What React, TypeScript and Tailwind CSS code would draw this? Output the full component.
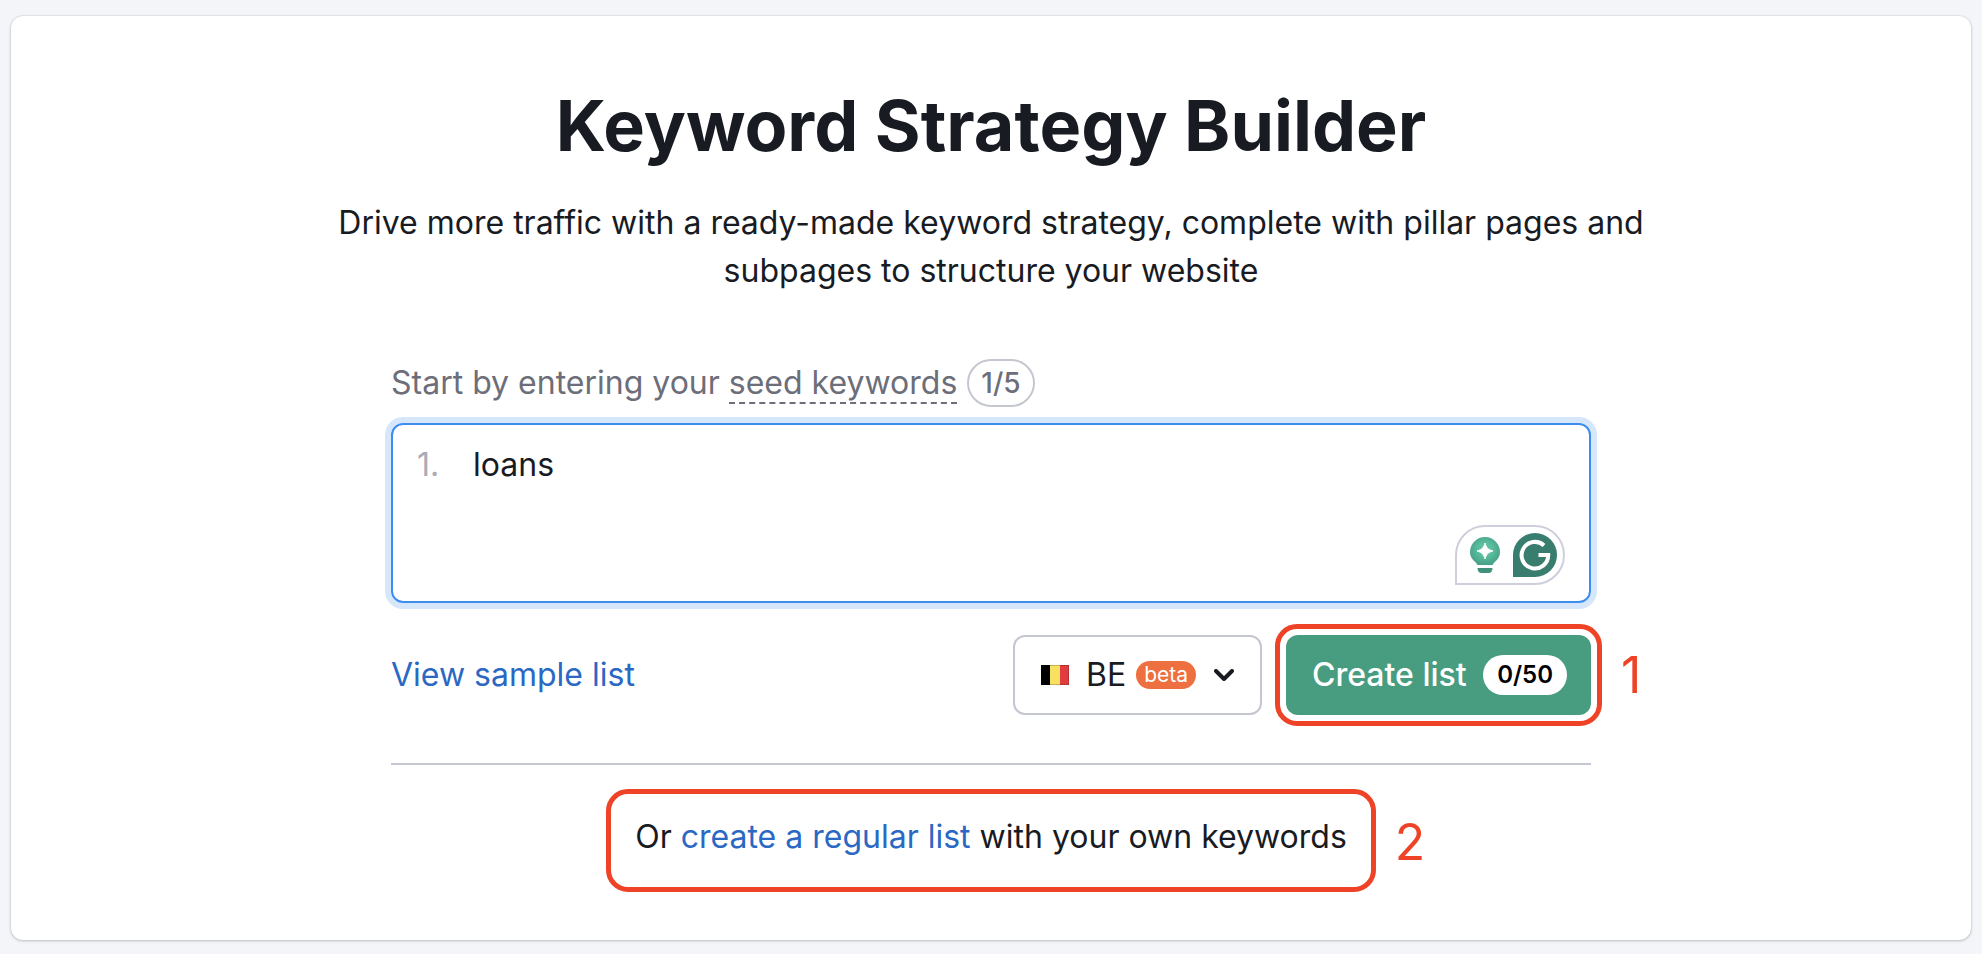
import { useState } from 'react';

const BulbIcon: React.FC = () => (
  <svg width="30" height="36" viewBox="0 0 30 36" aria-hidden="true">
    <defs>
      <radialGradient id="bulb" cx="0.5" cy="0.45" r="0.55">
        <stop offset="0.4" stopColor="#5bc0a0" />
        <stop offset="1" stopColor="#48a087" />
      </radialGradient>
    </defs>
    <path d="M15 0a15 15 0 0 1 15 15c0 5-3 8-5.500 10.200-.8.800-1.500 1.600-1.800 2.800H7.300c-.3-1.200-1-2-1.800-2.800C3 23 0 20 0 15A15 15 0 0 1 15 0Z" fill="url(#bulb)" />
    <path d="M15 6c1.300 4.800 3.200 6.700 8 8-4.800 1.300-6.700 3.200-8 8-1.300-4.800-3.200-6.700-8-8 4.800-1.300 6.700-3.200 8-8Z" fill="#fff" stroke="#fff" strokeLinejoin="round" />
    <path d="M7.500 31h15c0 3-1.500 5-4 5h-7c-2.500 0-4-2-4-5Z" fill="#419079" />
  </svg>
);

const GrammarIcon: React.FC = () => (
  <svg width="44" height="44" viewBox="0 0 44 44" fill="none" aria-hidden="true">
    <path d="M22 0a22 22 0 0 1 0 44H0V22A22 22 0 0 1 22 0Z" fill="#397d6e" />
    <path d="M31 12.500A13.300 13.300 0 1 0 35.200 22H25.500" stroke="#fff" strokeWidth="4" />
  </svg>
);

const BelgianFlag: React.FC = () => (
  <svg width="28" height="20" viewBox="0 0 28 20" aria-hidden="true">
    <path d="M0 0h9v20H0z" fill="#000" />
    <path d="M9 0h10v20H9z" fill="#f8e060" />
    <path d="M19 0h9v20h-9z" fill="#e13d40" />
    <path d="M9 .5h18.500v19H9" fill="none" stroke="#000" strokeOpacity="0.2" />
  </svg>
);

const App: React.FC = () => {
  const [keywords, setKeywords] = useState('loans');

  return (
    <div className="min-h-screen bg-[#f4f5f9] px-[11px] pt-4 pb-[13px] font-['Inter',sans-serif] text-[32px] leading-[48px] text-[#191b23]">
      <main className="rounded-xl bg-white px-8 pt-[62px] pb-12 shadow-[0_0_2px_rgba(25,27,35,0.2),0_1px_3px_rgba(25,27,35,0.2)]">
        <h1 className="text-center text-[70px] leading-[96px] font-bold">
          Keyword Strategy Builder
        </h1>
        <p className="mx-auto mt-[25px] max-w-[1360px] text-center">
          Drive more traffic with a ready-made keyword strategy, complete with pillar pages and subpages to structure your website
        </p>

        <div className="mx-auto mt-16 max-w-[1200px]">
          <div className="flex items-center gap-[10px] text-[#6c6e79]">
            <label htmlFor="keywords">
              Start by entering your{' '}
              <span className="inline-block h-[45px] border-b-2 border-dashed border-[#6c6e79]">seed keywords</span>
            </label>
            <span className="flex h-12 items-center rounded-full border-2 border-[#c4c7cf] px-3 text-[28px] font-medium">
              1/5
            </span>
          </div>

          <div className="relative mt-4 flex h-[180px] rounded-xl border-2 border-[#3d8df0] pt-4 pl-6 ring-6 ring-[#d6e7fc]">
            <span className="w-14 text-[#a9abb6]">1.</span>
            <textarea
              id="keywords"
              value={keywords}
              onChange={(e) => setKeywords(e.target.value)}
              className="flex-1 resize-none outline-none"
            />
            <div className="absolute right-6 bottom-4 flex h-[60px] w-[110px] items-center justify-between rounded-full rounded-bl-none border-2 border-[#cdcfdc] bg-white pr-[6px] pl-[13px]">
              <BulbIcon />
              <GrammarIcon />
            </div>
          </div>

          <div className="mt-8 flex items-center">
            <a href="#sample" className="mr-auto text-[#2b68c4]">View sample list</a>

            <div className="relative">
              <select
                aria-label="Database"
                className="h-20 w-[249px] appearance-none rounded-xl border-2 border-[#c4c7cf] bg-white pl-[71px]"
              >
                <option>BE</option>
              </select>
              <div className="pointer-events-none absolute inset-y-0 right-7 left-7 flex items-center">
                <BelgianFlag />
                <span className="mr-[18px] ml-auto rounded-full bg-[#ee6f40] px-2 text-[21px] leading-7 text-white">beta</span>
                <svg width="20" height="12" viewBox="0 0 20 12" fill="none" aria-hidden="true">
                  <path d="M2 2l8 8 8-8" stroke="#191b23" strokeWidth="4" strokeLinecap="round" strokeLinejoin="round" />
                </svg>
              </div>
            </div>

            <div className="relative ml-6">
              <button className="flex h-20 w-[305px] items-center justify-between rounded-xl bg-[#489c80] pr-6 pl-[26px] font-medium text-white">
                Create list
                <span className="rounded-full bg-white px-[14px] text-2xl leading-10 font-semibold text-black">0/50</span>
              </button>
              <div className="pointer-events-none absolute -inset-[11px] rounded-[22px] border-[5px] border-[#ee4326]" />
              <span className="absolute top-4 left-full ml-[30px] text-[50px] text-[#ee4326]">1</span>
            </div>
          </div>

          <hr className="mt-12 border-t-2 border-[#c4c7cf]" />

          <div className="relative mx-auto mt-6 w-fit rounded-[22px] border-[5px] border-[#ee4326] px-6 pt-[19px] pb-[26px]">
            <p>
              Or <a href="#regular" className="text-[#2b68c4]">create a regular list</a> with your own keywords
            </p>
            <span className="absolute top-6 left-full ml-6 text-[50px] text-[#ee4326]">2</span>
          </div>
        </div>
      </main>
    </div>
  );
};

export default App;
